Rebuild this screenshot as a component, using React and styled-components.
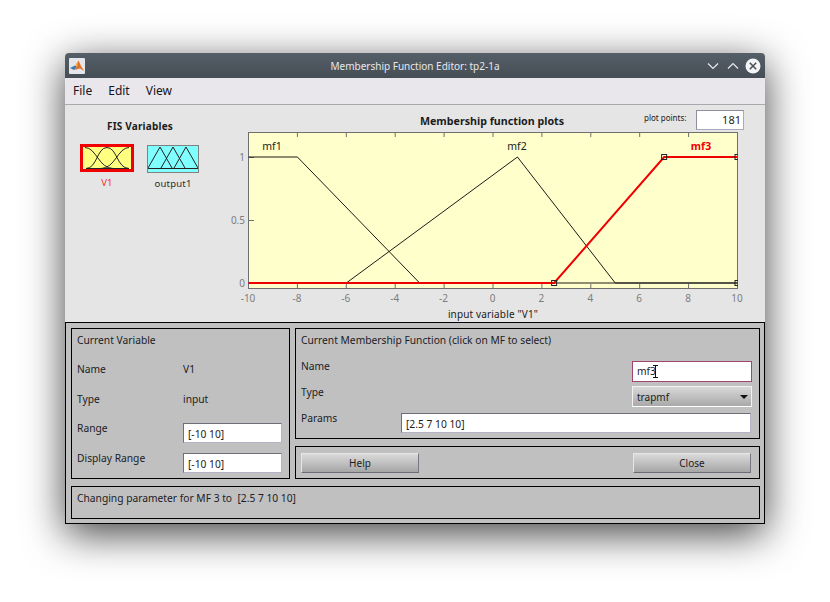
import React from 'react'
import styled, { createGlobalStyle } from 'styled-components'

const GlobalStyle = createGlobalStyle`
  * { box-sizing: border-box; }
  body {
    margin: 0;
    background: #fff;
    font-family: "Noto Sans", "Open Sans", sans-serif;
    color: #1c1c1c;
  }
`

const Page = styled.div`
  width: 830px;
  height: 602px;
  overflow: hidden;
  padding: 53px 0 0 65px;
`

const Window = styled.div`
  width: 700px;
  height: 471px;
  display: flex;
  flex-direction: column;
  border-radius: 4px 4px 0 0;
  box-shadow: 0 10px 40px rgba(0, 0, 0, 0.74);
`

const TitleBar = styled.div`
  height: 25px;
  flex: none;
  display: flex;
  align-items: center;
  padding: 0 4px;
  background: linear-gradient(#555f68, #464e55);
  border-radius: 4px 4px 0 0;
  color: #e6e8ea;
  font-size: 10px;
`

const Title = styled.div`
  flex: 1;
  text-align: center;
  padding-left: 40px;
`

const WindowButtons = styled.div`
  display: flex;
  align-items: center;
  gap: 4px;
`

const MenuBar = styled.div`
  height: 27px;
  flex: none;
  display: flex;
  align-items: center;
  gap: 16px;
  padding: 0 8px 1px;
  background: #e9e7ec;
  border-bottom: 1px solid #a9a9ad;
  font-size: 12px;
  color: #15151c;
`

const TopArea = styled.div`
  height: 217px;
  flex: none;
  display: flex;
  background: #e5e5e5;
`

const VarColumn = styled.div`
  width: 170px;
  flex: none;
  display: flex;
  flex-direction: column;
  align-items: center;
  padding: 14px 20px 0 0;
`

const VarHeading = styled.div`
  height: 15px;
  line-height: 15px;
  font-size: 10px;
  font-weight: 700;
  letter-spacing: 0.2px;
`

const VarRow = styled.div`
  display: flex;
  gap: 13px;
  margin-top: 10px;
  margin-left: -1px;
`

const VarTile = styled.div`
  display: flex;
  flex-direction: column;
  align-items: center;
  font-size: 9.5px;
  line-height: 14px;
  letter-spacing: 0.2px;
  color: ${p => (p.$active ? '#f23030' : '#2c2c2c')};
`

const TileBox = styled.div`
  width: ${p => p.$w}px;
  height: 28px;
  margin: ${p => (p.$active ? 0 : '1px 0')};
  background: ${p => p.$bg};
  border: ${p => (p.$active ? '3px solid #f00000' : '1px solid #808080')};
  margin-bottom: 4px;
  svg { display: block; }
`

const PlotColumn = styled.div`
  flex: 1;
  display: flex;
  flex-direction: column;
  min-width: 0;
`

const PlotHeader = styled.div`
  height: 23px;
  flex: none;
  display: flex;
  align-items: flex-start;
  padding: 5px 0 0 105px;
`

const PlotTitle = styled.div`
  width: 304px;
  margin-top: 3px;
  text-align: center;
  font-size: 10.7px;
  font-weight: 700;
  line-height: 16px;
`

const PlotPoints = styled.div`
  display: flex;
  align-items: flex-start;
  gap: 8px;
`

const PlotPointsLabel = styled.div`
  width: 44px;
  margin-top: 1px;
  font-size: 8px;
  line-height: 14px;
  white-space: nowrap;
`

const PointsInput = styled.div`
  width: 48px;
  height: 20px;
  background: #fff;
  border: 1px solid #a9abbc;
  border-top-color: #8d8f9e;
  border-left-color: #8d8f9e;
  text-align: right;
  padding-right: 2px;
  font-size: 11px;
  line-height: 18px;
`

const PlotSvg = styled.svg`
  display: block;
  flex: none;
  margin: -1px 0 0 -10px;
`

const BottomArea = styled.div`
  flex: 1;
  display: grid;
  grid-template-columns: 219px 465px;
  grid-template-rows: 111px 33px 33px;
  column-gap: 5px;
  row-gap: 7px;
  padding: 5px 4px 4px 5px;
  background: #c0c0c0;
  border: 1px solid #000;
  font-size: 10.25px;
  color: #1c1c24;
`

const Panel = styled.div`
  border: 1px solid #000;
  min-width: 0;
`

const VariablePanel = styled(Panel)`
  grid-row: 1 / 3;
  display: grid;
  grid-template-columns: 106px 98px;
  grid-template-rows: 29px 30px 29px 30px 29px;
  padding: 3px 0 0 5px;
`

const FunctionPanel = styled(Panel)`
  display: grid;
  grid-template-columns: 100px 350px;
  grid-template-rows: 26px 26px 26px 23px;
  padding: 3px 0 0 5px;
`

const ButtonPanel = styled(Panel)`
  display: flex;
  align-items: center;
  justify-content: space-between;
  padding: 0 8px 0 5px;
`

const StatusPanel = styled(Panel)`
  grid-column: 1 / 3;
  padding: 3px 0 0 5px;
  line-height: 16px;
`

const Label = styled.div`
  line-height: 16px;
  white-space: pre;
  grid-column: ${p => (p.$wide ? '1 / 3' : 'auto')};
`

const Input = styled.div`
  position: relative;
  height: ${p => p.$h || 20}px;
  width: ${p => p.$w}px;
  margin-top: ${p => p.$top || 0}px;
  justify-self: ${p => (p.$end ? 'end' : 'start')};
  background: #fff;
  border: 1px solid ${p => (p.$focus ? '#a3446f' : '#b2b4c6')};
  border-top-color: ${p => (p.$focus ? '#a3446f' : '#6c6e7a')};
  border-left-color: ${p => (p.$focus ? '#a3446f' : '#6c6e7a')};
  padding: ${p => (p.$focus ? 1 : 2)}px 0 0 4px;
  line-height: 16px;
  margin-right: ${p => (p.$end ? '-1px' : 0)};
`

const Cursor = styled.svg`
  position: absolute;
  left: 19px;
  top: 3px;
`

const Select = styled.div`
  display: flex;
  align-items: center;
  justify-content: space-between;
  justify-self: end;
  width: 120px;
  height: 21px;
  margin: 2px -1px 0 0;
  padding: 0 3px 0 4px;
  background: linear-gradient(#d8d8d8, #a9a9a9);
  border: 1px solid #f2f2f2;
  border-bottom-color: #fff;
  font-size: 10px;
`

const Arrow = styled.div`
  width: 0;
  height: 0;
  border-left: 4px solid transparent;
  border-right: 4px solid transparent;
  border-top: 4px solid #111;
`

const Button = styled.div`
  width: 118px;
  height: 20px;
  display: flex;
  align-items: center;
  justify-content: center;
  background: linear-gradient(#dadada, #a6a6a6);
  border: 1px solid;
  border-color: #e6e6e6 #77777f #6c6c74 #e6e6e6;
  font-size: 10px;
`

const MatlabIcon = () => (
  <svg width="16" height="16" viewBox="0 0 16 16">
    <rect width="16" height="16" rx="1" fill="#e4e6ea" />
    <path d="M1 10 L6 7.5 L8 9 L5 12 Z" fill="#3f78b5" />
    <path d="M5 12 L8 9 L6.5 7.5 L9.5 2.5 L12 8 L15 13 L11 10.5 Z" fill="#e2702a" />
    <path d="M9.5 2.5 L6.5 7.5 L8 9 Z" fill="#f4b23c" />
  </svg>
)

const Chevron = ({ up }) => (
  <svg width="16" height="16" viewBox="0 0 16 16" fill="none" stroke="#e8eaec" strokeWidth="1.2">
    <path d={up ? 'M3 10.5 L8 5.5 L13 10.5' : 'M3 5.5 L8 10.5 L13 5.5'} />
  </svg>
)

const CloseIcon = () => (
  <svg width="16" height="16" viewBox="0 0 16 16">
    <circle cx="8" cy="8" r="7.5" fill="#f4f5f6" />
    <path d="M4.8 4.8 L11.2 11.2 M11.2 4.8 L4.8 11.2" stroke="#4b5359" strokeWidth="1.6" />
  </svg>
)

const InputCurves = () => (
  <svg width="48" height="22" viewBox="0 0 48 22" fill="none" stroke="#222" strokeWidth="1">
    <path d="M2 .5 C13 .5 16 21.5 30 21.5" />
    <path d="M3 21.5 C14 21.5 14 .5 24 .5 C34 .5 34 21.5 46 21.5" />
    <path d="M18 21.5 C32 21.5 35 .5 46 .5" />
    <path d="M3 21.5 H46" strokeWidth="1.2" />
  </svg>
)

const OutputCurves = () => (
  <svg width="50" height="24" viewBox="0 0 50 24" fill="none" stroke="#222" strokeWidth="1">
    <path d="M0 22 L12 1 L24 22" />
    <path d="M13 22 L25 1 L37 22" />
    <path d="M26 22 L38 1 L50 22" />
    <path d="M0 22.5 H50" strokeWidth="1.2" />
  </svg>
)

// plot axes in svg coordinates, svg sits at page x=225, y=127
const sx = v => 23 + (v + 10) * 24.45
const sy = v => 156 - v * 126
const xTicks = [-10, -8, -6, -4, -2, 0, 2, 4, 6, 8, 10]
const yTicks = [0, 0.5, 1]
const line = pts => pts.map(([x, y]) => `${sx(x) + 0.5},${sy(y)}`).join(' ')
const handles = [[2.5, 0], [7, 1], [10, 1], [10, 0]]

const Plot = () => (
  <PlotSvg width="530" height="195" viewBox="0 0 530 195">
    <defs>
      <clipPath id="axes">
        <rect x="23" y="5" width="490" height="157" />
      </clipPath>
    </defs>
    <rect x="23.5" y="5.5" width="489" height="156" fill="#ffffcc" stroke="#6e6e6e" />
    {xTicks.map(t => (
      <g key={t}>
        <path d={`M${sx(t) + 0.5} 161 v-4 M${sx(t) + 0.5} 6 v4`} stroke="#6e6e6e" />
        <text x={sx(t)} y="175" fontSize="10" fill="#7d7d7d" textAnchor="middle">{t}</text>
      </g>
    ))}
    {yTicks.map(t => (
      <g key={t}>
        <path d={`M24 ${sy(t) + 0.5} h5`} stroke="#6e6e6e" />
        <text x="20" y={sy(t) + 4} fontSize="10" fill="#7d7d7d" textAnchor="end">{t}</text>
      </g>
    ))}
    <g clipPath="url(#axes)">
      <polyline points={line([[-10, 1], [-8, 1], [-3, 0], [10, 0]])} fill="none" stroke="#1a1a1a" />
      <polyline points={line([[-10, 0], [-6, 0], [1, 1], [5, 0], [10, 0]])} fill="none" stroke="#1a1a1a" />
      <polyline points={line([[-10, 0], [2.5, 0], [7, 1], [10, 1]])} fill="none" stroke="#f00000" strokeWidth="2" />
      {handles.map(([x, y]) => (
        <rect key={`${x}-${y}`} x={sx(x) - 2} y={sy(y) - 2.5} width="5" height="5" fill="none" stroke="#222" />
      ))}
    </g>
    <text x="47" y="23" fontSize="10.5" fill="#222" textAnchor="middle">mf1</text>
    <text x="292" y="23" fontSize="10.5" fill="#222" textAnchor="middle">mf2</text>
    <text x="476" y="23" fontSize="10.5" fontWeight="700" fill="#f00000" textAnchor="middle">mf3</text>
    <text x="268" y="191" fontSize="10" fill="#222" textAnchor="middle" letterSpacing="0.15">input variable "V1"</text>
  </PlotSvg>
)

export default function App() {
  return (
    <Page>
      <GlobalStyle />
      <Window>
        <TitleBar>
          <MatlabIcon />
          <Title>Membership Function Editor: tp2-1a</Title>
          <WindowButtons>
            <Chevron />
            <Chevron up />
            <CloseIcon />
          </WindowButtons>
        </TitleBar>
        <MenuBar>
          <span>File</span>
          <span>Edit</span>
          <span>View</span>
        </MenuBar>
        <TopArea>
          <VarColumn>
            <VarHeading>FIS Variables</VarHeading>
            <VarRow>
              <VarTile $active>
                <TileBox $active $w={54} $bg="#ffff80"><InputCurves /></TileBox>
                V1
              </VarTile>
              <VarTile>
                <TileBox $w={52} $bg="#80ffff"><OutputCurves /></TileBox>
                output1
              </VarTile>
            </VarRow>
          </VarColumn>
          <PlotColumn>
            <PlotHeader>
              <PlotTitle>Membership function plots</PlotTitle>
              <PlotPoints>
                <PlotPointsLabel>plot points:</PlotPointsLabel>
                <PointsInput>181</PointsInput>
              </PlotPoints>
            </PlotHeader>
            <Plot />
          </PlotColumn>
        </TopArea>
        <BottomArea>
          <VariablePanel>
            <Label $wide>Current Variable</Label>
            <Label>Name</Label>
            <Label>V1</Label>
            <Label>Type</Label>
            <Label>input</Label>
            <Label>Range</Label>
            <Input $w={99} $top={3}>[-10 10]</Input>
            <Label>Display Range</Label>
            <Input $w={99} $top={3}>[-10 10]</Input>
          </VariablePanel>
          <FunctionPanel>
            <Label $wide>Current Membership Function (click on MF to select)</Label>
            <Label>Name</Label>
            <Input $w={120} $h={21} $top={3} $end $focus>
              mf3
              <Cursor width="7" height="13" viewBox="0 0 7 13" fill="none" stroke="#111">
                <path d="M1 .5 H6 M3.5 .5 V12.5 M1 12.5 H6" />
              </Cursor>
            </Input>
            <Label>Type</Label>
            <Select>trapmf<Arrow /></Select>
            <Label>Params</Label>
            <Input $w={350} $top={3}>[2.5 7 10 10]</Input>
          </FunctionPanel>
          <ButtonPanel>
            <Button>Help</Button>
            <Button>Close</Button>
          </ButtonPanel>
          <StatusPanel>
            <Label>Changing parameter for MF 3 to  [2.5 7 10 10]</Label>
          </StatusPanel>
        </BottomArea>
      </Window>
    </Page>
  )
}
